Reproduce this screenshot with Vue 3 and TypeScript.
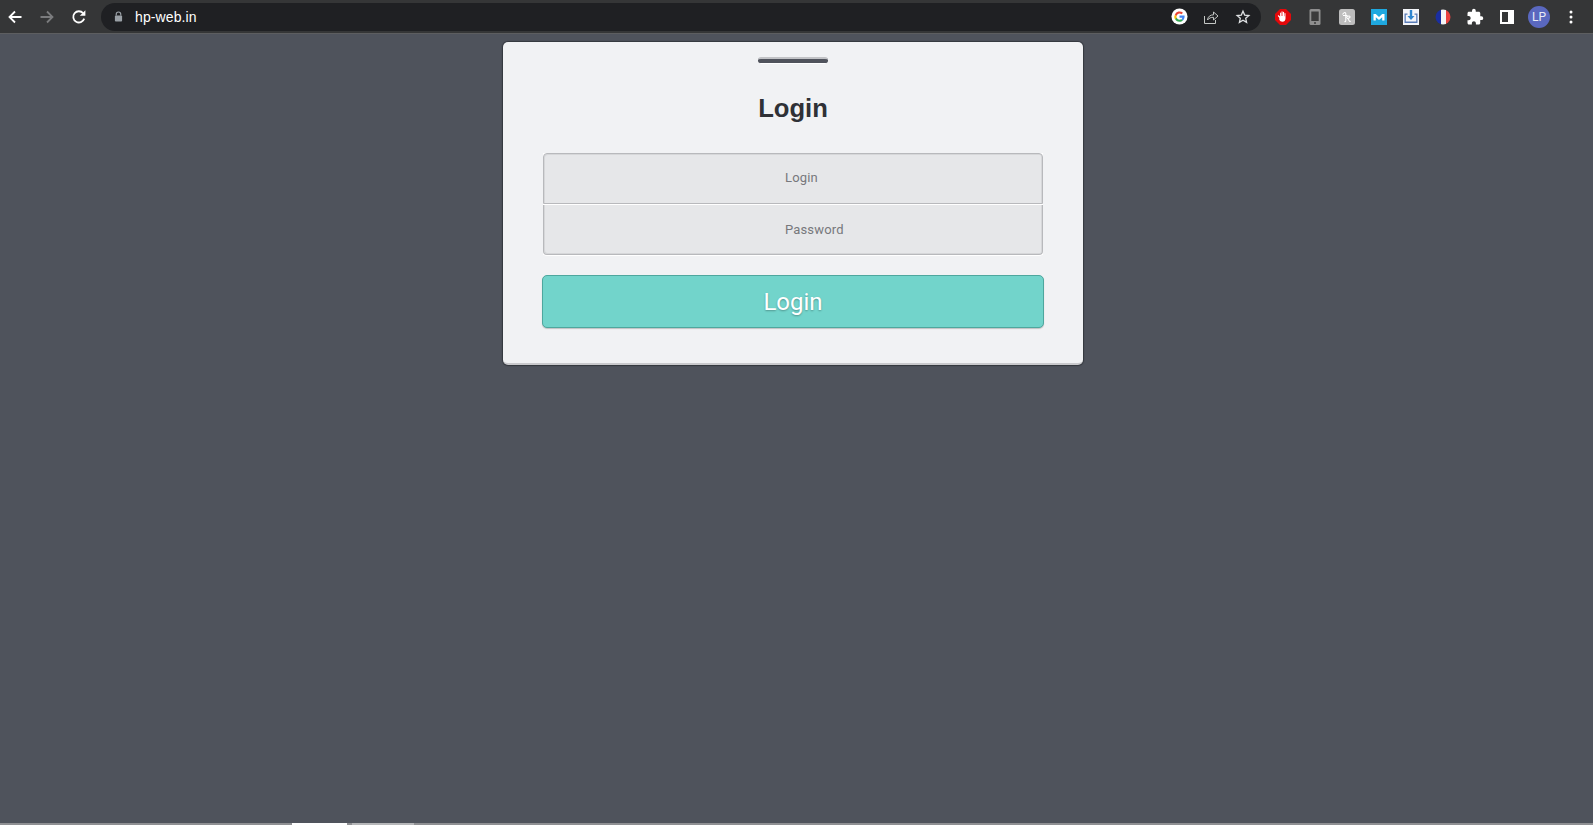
<script setup lang="ts">
const url: string = 'hp-web.in'
</script>

<template>
  <div class="page">
    <header class="toolbar">
      <div class="nav">
        <svg class="ico" viewBox="0 0 16 16"><path d="M14.500 8H2.500M8 2.500 2.500 8 8 13.500" fill="none" stroke="#fff" stroke-width="1.800"/></svg>
        <svg class="ico" viewBox="0 0 16 16"><path d="M1.500 8h12M8 2.500 13.500 8 8 13.500" fill="none" stroke="#7b7c7e" stroke-width="1.800"/></svg>
        <svg class="ico" viewBox="0 0 16 16"><path d="M13.200 9.600A5.600 5.600 0 1 1 12.200 4.300" fill="none" stroke="#fff" stroke-width="1.800"/><path d="M14.400 1.200v5.600H8.800z" fill="#fff"/></svg>
      </div>
      <div class="omnibox">
        <svg class="lock" viewBox="0 0 10 12"><path d="M2.500 5V3.500a2.500 2.500 0 0 1 5 0V5" fill="none" stroke="#9aa0a6" stroke-width="1.300"/><rect x="1" y="5" width="8" height="6.500" rx="1" fill="#9aa0a6"/></svg>
        <span class="url">{{ url }}</span>
        <span class="grow"></span>
        <svg class="g-logo" viewBox="0 0 18 18">
          <circle cx="9" cy="9" r="8.500" fill="#fff"/>
          <path d="M14.400 9.100c0-.4 0-.8-.1-1.100H9v2.200h3c-.1.700-.5 1.300-1.100 1.700l1.700 1.300c1-.9 1.800-2.300 1.800-4.100z" fill="#4285f4"/>
          <path d="M9 14.500c1.500 0 2.700-.5 3.600-1.300l-1.700-1.300c-.5.300-1.100.5-1.900.5-1.400 0-2.700-1-3.100-2.300L4.100 11a5.500 5.500 0 0 0 4.900 3.500z" fill="#34a853"/>
          <path d="M5.900 10.600a3.300 3.300 0 0 1 0-2.200L4.100 7a5.500 5.500 0 0 0 0 5z" fill="#fbbc05"/>
          <path d="M9 5.700c.8 0 1.500.3 2.100.8L12.700 5A5.500 5.500 0 0 0 4.100 7l1.800 1.400C6.300 7 7.600 5.700 9 5.700z" fill="#ea4335"/>
        </svg>
        <svg class="share" viewBox="0 0 16 16"><path d="M1.500 7v7.500h11V11" fill="none" stroke="#c4c7c5" stroke-width="1"/><path d="M4.500 11c.3-3.500 3-5.200 6-5.200V3l4.500 4-4.500 4V8.300c-2.500 0-4.500.7-6 2.700z" fill="none" stroke="#c4c7c5" stroke-width="1"/></svg>
        <svg class="star" viewBox="0 0 16 16"><path d="M8 2.200l1.700 3.900 4.200.4-3.200 2.800.9 4.100L8 11.300l-3.600 2.100.9-4.100-3.200-2.800 4.200-.4z" fill="none" stroke="#dfe1e3" stroke-width="1.300"/></svg>
      </div>
      <div class="extensions">
        <div class="slot">
          <svg class="ext" viewBox="0 0 16 16"><path d="M5 0h6l5 5v6l-5 5H5l-5-5V5z" fill="#e4080a"/><path d="M4.300 8.800 3 7.300c-.5-.6.300-1.300.9-.8l1.200 1.100V4.200c0-.8 1-.8 1 0V7h.4V2.800c0-.8 1.100-.8 1.100 0V7H8V3.300c0-.8 1.100-.8 1.100 0V7.200h.4V4.500c0-.8 1-.8 1 0v5c0 2-1.300 3.300-3.100 3.300-1.500 0-2.400-.8-3.100-2z" fill="#fff"/></svg>
        </div>
        <div class="slot">
          <svg class="ext" viewBox="0 0 16 16"><rect x="2.500" y="0" width="11" height="16" rx="1.500" fill="#8e8e8e"/><rect x="4.300" y="2.500" width="7.400" height="9.500" fill="#3a3a3a"/><circle cx="8" cy="14" r="1" fill="#3a3a3a"/></svg>
        </div>
        <div class="slot">
          <svg class="ext" viewBox="0 0 16 16"><rect width="16" height="16" rx="2.500" fill="#bdbdbd"/><path d="M3.500 5.500C5 3 6.800 2.800 6.800 5v6.500c0 1.200-.7 1.400-1.300.8M4 6.500h4.500M6.800 9c2-2.500 4.200-2.500 4.200-1 0 1-1.600 1.500-3 1.300 1.300.3 1.800 1.800 2.300 2.700.3.500.9.500 1.500.1" fill="none" stroke="#fff" stroke-width="1.100"/></svg>
        </div>
        <div class="slot">
          <svg class="ext" viewBox="0 0 16 16"><rect width="16" height="16" fill="#1fa9e0"/><path d="M2.500 11.500V5h2.300L8 8l3.200-3h2.300v6.500h-2.300V8.200L8 11 4.800 8.200v3.300z" fill="#fff"/></svg>
        </div>
        <div class="slot">
          <svg class="ext" viewBox="0 0 16 16"><rect width="16" height="16" fill="#f4f6fa"/><path d="M1.500 4.500h3v1.300H2.800v6.700h10.400V5.800h-1.700V4.500h3v9.500h-13z" fill="#5a7db8"/><path d="M6.800 1h2.400v6h2.300L8 11 4.500 7h2.300z" fill="#2f86d0"/></svg>
        </div>
        <div class="slot">
          <svg class="ext" viewBox="0 0 16 16"><clipPath id="fr"><circle cx="8" cy="8" r="7.500"/></clipPath><g clip-path="url(#fr)"><rect width="6" height="16" fill="#1a2ea0"/><rect x="6" width="5" height="16" fill="#f5f5f5"/><rect x="11" width="5" height="16" fill="#e8413f"/></g></svg>
        </div>
        <div class="slot">
          <svg class="puzzle" viewBox="0 0 24 24"><path d="M20.500 11H19V7c0-1.100-.9-2-2-2h-4V3.500a2.500 2.500 0 0 0-5 0V5H4c-1.100 0-1.990.9-1.990 2v3.800H3.500c1.490 0 2.700 1.210 2.700 2.700s-1.210 2.700-2.700 2.700H2V20c0 1.100.9 2 2 2h3.800v-1.500c0-1.490 1.210-2.700 2.700-2.700 1.490 0 2.700 1.210 2.700 2.700V22H17c1.100 0 2-.9 2-2v-4h1.500a2.500 2.500 0 0 0 0-5z" fill="#fff"/></svg>
        </div>
        <div class="slot">
          <svg class="side" viewBox="0 0 14 14"><path fill-rule="evenodd" d="M0 0h14v14H0zM2 2v10h6V2z" fill="#fff"/></svg>
        </div>
        <div class="slot">
          <div class="avatar">LP</div>
        </div>
        <div class="slot">
          <svg class="dots" viewBox="0 0 4 14"><circle cx="2" cy="2" r="1.500" fill="#fff"/><circle cx="2" cy="7" r="1.500" fill="#fff"/><circle cx="2" cy="12" r="1.500" fill="#fff"/></svg>
        </div>
      </div>
    </header>

    <main class="stage">
      <form class="card" @submit.prevent>
        <div class="handle"></div>
        <h1 class="title">Login</h1>
        <div class="fields">
          <input class="field first" type="text" placeholder="Login" />
          <input class="field second" type="password" placeholder="Password" />
        </div>
        <button class="submit" type="submit">Login</button>
      </form>
    </main>

    <footer class="strip">
      <span class="seg-a"></span>
      <span class="seg-b"></span>
    </footer>
  </div>
</template>

<style>
html, body { margin: 0; overflow: hidden; }
</style>

<style scoped>
.page {
  width: 1593px;
  height: 825px;
  display: flex;
  flex-direction: column;
  background: #4f535c;
  overflow: hidden;
  font-family: Roboto, "Liberation Sans", sans-serif;
}
.toolbar {
  height: 33px;
  flex: none;
  display: flex;
  align-items: center;
  background: #353637;
  border-bottom: 1px solid #5d5e60;
}
.nav {
  display: flex;
  align-items: center;
  gap: 16px;
  padding-left: 7px;
  width: 101px;
  box-sizing: border-box;
}
.ico { width: 16px; height: 16px; }
.omnibox {
  width: 1160px;
  height: 28px;
  border-radius: 14px;
  background: #1f2023;
  display: flex;
  align-items: center;
  padding: 0 10px 0 13px;
  box-sizing: border-box;
}
.lock { width: 9px; height: 11px; }
.url {
  margin-left: 12px;
  color: #fff;
  font: 14px "Liberation Sans", sans-serif;
  letter-spacing: 0.1px;
}
.grow { flex: 1; }
.g-logo { width: 17px; height: 17px; margin-right: 15px; }
.share { width: 16px; height: 16px; margin-right: 16px; }
.star { width: 16px; height: 16px; }
.extensions {
  display: flex;
  align-items: center;
  margin-left: 6px;
}
.slot {
  width: 32px;
  display: flex;
  justify-content: center;
  align-items: center;
}
.ext { width: 16px; height: 16px; flex: none; }
.puzzle { width: 18px; height: 18px; flex: none; }
.side { width: 14px; height: 14px; }
.avatar {
  width: 22px;
  height: 22px;
  flex: none;
  border-radius: 50%;
  background: #5a68bf;
  color: #e8eaf6;
  font: 12px/22px Roboto, sans-serif;
  text-align: center;
}
.dots { width: 4px; height: 14px; }
.stage {
  flex: 1;
  display: flex;
  justify-content: center;
  align-items: flex-start;
  padding: 8px 7px 0 0;
}
.card {
  width: 580px;
  height: 323px;
  box-sizing: border-box;
  background: #f1f2f4;
  border-radius: 5px;
  border-bottom: 2px solid #c9c9cc;
  box-shadow: 0 0 1px 1px rgba(30, 32, 38, 0.55);
  padding: 15px 39px 0;
  display: flex;
  flex-direction: column;
  align-items: center;
}
.handle {
  width: 70px;
  height: 4px;
  flex: none;
  border-radius: 3px;
  background: #50535c;
  border-top: 2px solid #c2c3c6;
  border-bottom: 1px solid #fff;
}
.title {
  margin: 26px 0 0;
  font: bold 25.600px/36px "Liberation Sans", sans-serif;
  color: #2f3136;
  text-align: center;
}
.fields {
  margin-top: 27px;
  width: 500px;
  display: flex;
  flex-direction: column;
  gap: 1px;
  background: #fff;
}
.field {
  width: 100%;
  box-sizing: border-box;
  background: #e6e7e9;
  border: 1px solid #b8b9bc;
  outline: none;
  text-align: left;
  font: 13px Roboto, sans-serif;
  letter-spacing: 0.15px;
  color: #333;
  padding: 0 0 0 241px;
}
.field::placeholder { color: #77787c; opacity: 1; }
.first {
  height: 51px;
  padding-bottom: 2px;
  border-radius: 4px 4px 0 0;
  box-shadow: inset 1px 1px 0 #d6d7d9, inset -1px 0 0 #d6d7d9;
}
.second {
  height: 50px;
  border-top: none;
  border-radius: 0 0 4px 4px;
  box-shadow: 0 1px 0 #fff, inset 1px -1px 0 #d6d7d9, inset -1px 0 0 #d6d7d9;
}
.submit {
  margin-top: 20px;
  width: 502px;
  height: 53px;
  flex: none;
  background: #72d4cb;
  border: 1px solid #4ea79e;
  border-radius: 5px;
  box-shadow: 0 1px 1px rgba(0, 0, 0, 0.2);
  color: #fff;
  font: 24px Roboto, sans-serif;
  text-shadow: 0 1px 2px rgba(0, 0, 0, 0.3);
  padding: 0;
}
.strip {
  height: 2px;
  flex: none;
  background: #8f9093;
  display: flex;
  padding-left: 292px;
}
.seg-a { width: 55px; background: #fff; }
.seg-b { width: 62px; margin-left: 5px; background: #b6b7b9; }
</style>
